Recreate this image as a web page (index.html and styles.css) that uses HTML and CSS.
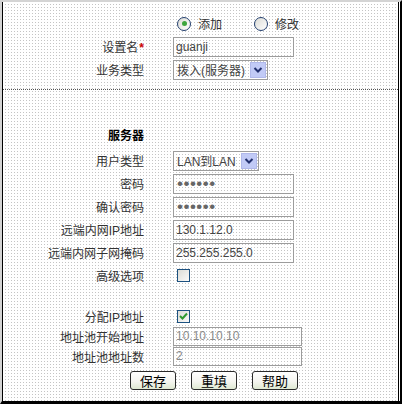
FILE: index.html
```html
<!DOCTYPE html>
<html lang="zh-CN">
<head>
    <meta charset="UTF-8">
    <meta name="viewport" content="width=device-width, initial-scale=1.0">
    <title>业务设置</title>
    <link rel="stylesheet" href="styles.css">
</head>
<body>
<div class="frame">
    <div class="page">
        <div class="row row-mode">
            <div class="label"></div>
            <div class="field">
                <span class="radio on"></span><span class="opt">添加</span>
                <span class="radio second"></span><span class="opt">修改</span>
            </div>
        </div>
        <div class="row">
            <div class="label">设置名<span class="req">*</span></div>
            <div class="field"><input class="txt" type="text" value="guanji"></div>
        </div>
        <div class="row">
            <div class="label">业务类型</div>
            <div class="field">
                <div class="select sel-type"><span>拨入(服务器)</span><span class="arrow"><svg width="10" height="8" viewBox="0 0 10 8"><path d="M1.5 2 L5 5.5 L8.5 2" fill="none" stroke="#22306e" stroke-width="2"/></svg></span></div>
            </div>
        </div>

        <div class="sep"></div>

        <div class="row row-title">
            <div class="label title">服务器</div>
        </div>
        <div class="row">
            <div class="label">用户类型</div>
            <div class="field">
                <div class="select sel-user"><span>LAN到LAN</span><span class="arrow"><svg width="10" height="8" viewBox="0 0 10 8"><path d="M1.5 2 L5 5.5 L8.5 2" fill="none" stroke="#22306e" stroke-width="2"/></svg></span></div>
            </div>
        </div>
        <div class="row">
            <div class="label">密码</div>
            <div class="field"><input class="txt pwd" type="password" value="123456"></div>
        </div>
        <div class="row">
            <div class="label">确认密码</div>
            <div class="field"><input class="txt pwd" type="password" value="123456"></div>
        </div>
        <div class="row">
            <div class="label">远端内网IP地址</div>
            <div class="field"><input class="txt" type="text" value="130.1.12.0"></div>
        </div>
        <div class="row">
            <div class="label">远端内网子网掩码</div>
            <div class="field"><input class="txt" type="text" value="255.255.255.0"></div>
        </div>
        <div class="row">
            <div class="label">高级选项</div>
            <div class="field"><span class="check"></span></div>
        </div>

        <div class="row row-small row-gap">
            <div class="label">分配IP地址</div>
            <div class="field"><span class="check on"><svg width="9" height="8" viewBox="0 0 9 8"><path d="M1 4 L3.5 6.5 L8 1.5" fill="none" stroke="#2f9a2f" stroke-width="2"/></svg></span></div>
        </div>
        <div class="row row-small">
            <div class="label">地址池开始地址</div>
            <div class="field"><input class="txt wide off" type="text" value="10.10.10.10"></div>
        </div>
        <div class="row row-small">
            <div class="label">地址池地址数</div>
            <div class="field"><input class="txt wide off" type="text" value="2"></div>
        </div>

        <div class="buttons">
            <button class="btn">保存</button>
            <button class="btn">重填</button>
            <button class="btn">帮助</button>
        </div>
    </div>
</div>
</body>
</html>
```

FILE: styles.css
```css
body {
    margin: 0;
    font-family: "Liberation Sans", "Noto Sans CJK SC", sans-serif;
    font-size: 12px;
    color: #333;
}
.frame {
    width: 402px;
    height: 404px;
    box-sizing: border-box;
    background-color: #fff;
    border-top: 2px solid #d4d4d4;
    border-left: 2px solid #d4d4d4;
    border-right: 2px solid #000;
    border-bottom: 3px solid #000;
    padding-right: 1px;
}
.page {
    height: 100%;
    box-sizing: border-box;
    border-left: 1px solid #000;
    border-right: 1px solid #000;
    padding-top: 10px;
    background-color: #c4c4c4;
    background-image: linear-gradient(to right, #fff 2px, transparent 2px), linear-gradient(to bottom, #fff 2px, transparent 2px);
    background-size: 3px 3px;
}
.row {
    display: flex;
    align-items: center;
    height: 23px;
}
.label {
    width: 141px;
    flex: none;
    text-align: right;
    white-space: nowrap;
}
.field {
    margin-left: 29px;
    display: flex;
    align-items: center;
}
.req {
    color: #c00;
    font-weight: bold;
    margin-left: 1px;
}
.title {
    font-weight: bold;
    color: #000;
}
.row-title {
    height: 24px;
    margin-top: 32px;
    margin-bottom: 3px;
}
.sep {
    margin-top: 8px;
    border-top: 1px dotted #555;
}

/* radio / checkbox */
.radio {
    width: 12px;
    height: 12px;
    border: 1px solid #24406f;
    border-radius: 50%;
    background: linear-gradient(135deg, #dcdcd6, #fff);
    margin-left: 4px;
    display: inline-flex;
    align-items: center;
    justify-content: center;
}
.radio.on::after {
    content: "";
    width: 5px;
    height: 5px;
    border-radius: 50%;
    background-color: #3da53d;
}
.radio.second {
    margin-left: 32px;
}
.opt {
    margin-left: 7px;
}
.check {
    width: 11px;
    height: 11px;
    border: 1px solid #1c5180;
    margin-left: 4px;
    display: inline-flex;
    align-items: center;
    justify-content: center;
    background: linear-gradient(135deg, #dcdcd6, #fafafa);
}

/* inputs */
.txt {
    width: 121px;
    height: 20px;
    box-sizing: border-box;
    border: 1px solid #9c9c9c;
    background: transparent;
    padding: 0 2px;
    font-family: "Liberation Sans", "Noto Sans CJK SC", sans-serif;
    font-size: 12px;
    color: #444;
    outline: none;
}
.pwd {
    font-size: 17px;
    letter-spacing: 0.5px;
    padding-left: 3px;
    color: #666;
}
.wide {
    width: 129px;
    height: 19px;
}
.off {
    color: #8a8a8a;
}
.select {
    height: 20px;
    box-sizing: border-box;
    border: 1px solid #9c9c9c;
    display: flex;
    align-items: center;
    justify-content: space-between;
    padding-left: 3px;
    padding-right: 1px;
    color: #444;
}
.sel-type {
    width: 95px;
}
.sel-user {
    width: 86px;
}
.arrow {
    width: 16px;
    height: 16px;
    background-color: #c1caf6;
    border: 1px solid #b0b8ea;
    box-sizing: border-box;
    display: flex;
    align-items: center;
    justify-content: center;
}

.row-small {
    height: 20px;
}
.row-gap {
    margin-top: 19px;
}

.buttons {
    display: flex;
    gap: 15px;
    margin-top: 5px;
    padding-left: 127px;
}
.btn {
    width: 46px;
    height: 19px;
    padding: 0;
    border: 1px solid #2a2a2a;
    border-radius: 3px;
    background: linear-gradient(to bottom, #fff 0%, #f5f5f0 55%, #dfe9d2 100%);
    font-family: "Noto Sans CJK SC", sans-serif;
    font-size: 13px;
    line-height: 17px;
    color: #000;
}
```
